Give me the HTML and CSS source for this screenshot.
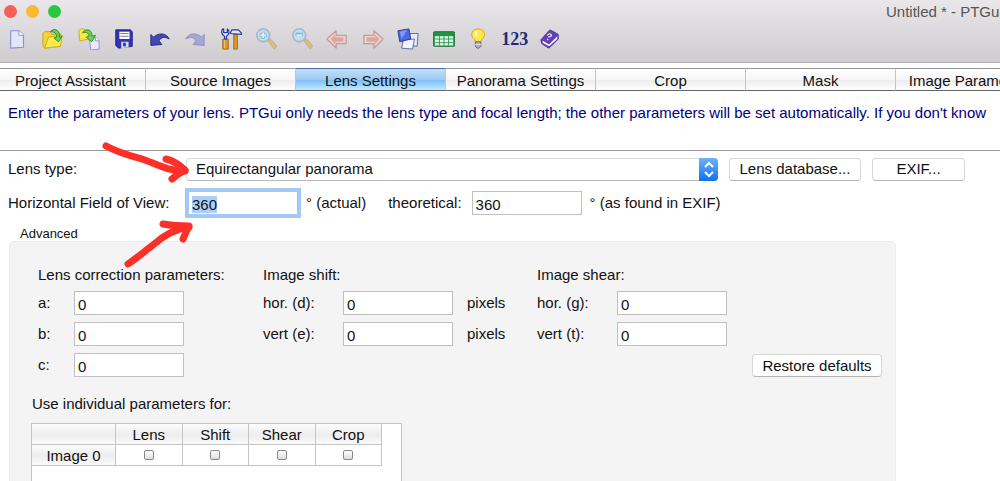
FILE: index.html
```html
<!DOCTYPE html>
<html lang="en">

<head>
  <meta charset="UTF-8">
  <meta name="viewport" content="width=device-width, initial-scale=1.0">
  <title>Untitled * - PTGui</title>
  <link rel="stylesheet" href="styles.css">
</head>

<body>
  <header class="window-header">
    <div class="titlebar">
      <button class="light close" aria-label="Close"></button>
      <button class="light minimize" aria-label="Minimize"></button>
      <button class="light maximize" aria-label="Zoom window"></button>
      <h1 class="window-title">Untitled * - PTGui</h1>
    </div>

    <div class="toolbar">
      <button class="tool" aria-label="New">
        <svg viewBox="0 0 24 24">
          <path d="M4 3h9l5 5v13l-14 1z" fill="#e3e5fa" stroke="#8f90cc" stroke-width="1.2" />
          <path d="M13 3v5h5" fill="#fff" stroke="#8f90cc" />
        </svg>
      </button>
      <button class="tool" aria-label="Open">
        <svg viewBox="0 0 24 24">
          <path d="M1 6l2-2h6l2 3 9-1v14L3 22 1 20z" fill="#f5d437" stroke="#c6a31c" />
          <path d="M3 22l4-12 15-2-2 12z" fill="#ffeb50" stroke="#cbaa20" />
          <path d="M9 4C14-1 20 3 19 10l3-1-4 6-5-4 3-1c0-4-2-6-7-6z" fill="#6fd356" stroke="#238b24" />
        </svg>
      </button>
      <button class="tool" aria-label="Apply template">
        <svg viewBox="0 0 24 24">
          <path d="M1 3l2-2h4l1 2 4-1v10L2 14z" fill="#ffe544" stroke="#cdab24" />
          <path d="M12 10h7l4 4v9l-9 1z" fill="#e9eafb" stroke="#8f90cc" />
          <path d="M19 10v4h4" fill="#fff" stroke="#8f90cc" />
          <path d="M5 5C10-1 16 3 15 9l4-1-4 7-6-5 3-1c0-3-2-5-7-4z" fill="#6fd356" stroke="#238b24" />
        </svg>
      </button>
      <button class="tool" aria-label="Save">
        <svg viewBox="0 0 24 24">
          <path d="M3 2h16l2 2v16l-15 2-3-3z" fill="#3334b5" stroke="#20217f" />
          <path d="M7 4h11v8H7z" fill="#fff" />
          <path d="M8 6h9M8 9h9" stroke="#6868b8" />
          <path d="M9 15h8v6l-8 1z" fill="#d5d8fa" />
          <path d="M11 16h3v4h-3z" fill="#3334b5" />
        </svg>
      </button>
      <button class="tool" aria-label="Undo">
        <svg viewBox="0 0 24 24">
          <path d="M2 7l3 3C10 5 19 5 22 12c-5-3-9-2-11 2l3 4-12 1z" fill="#4545ba" stroke="#25267c" />
        </svg>
      </button>
      <button class="tool faded" aria-label="Redo">
        <svg viewBox="0 0 24 24">
          <path d="M22 7l-3 3C14 5 5 5 2 12c5-3 9-2 11 2l-3 4 12 1z" fill="#7678d1" stroke="#424a9f" />
        </svg>
      </button>
      <button class="tool" aria-label="Tools">
        <svg viewBox="0 0 24 24">
          <path d="M3 12h6v11H3z" fill="#d99a24" stroke="#9b6a1d" />
          <path d="M5 13v9M17 10v12" stroke="#fac95e" />
          <path d="M5 12V9C0 6 2 1 4 1v4h4V1c3 2 2 6-1 8v3z" fill="#f3f5ff" stroke="#2935a4" stroke-width="1.3" />
          <path d="M15 7h4v16h-4z" fill="#d99a24" stroke="#9b6a1d" />
          <path d="M11 6l2-4h7l4 4v1z" fill="#e3e8ff" stroke="#2935a4" stroke-width="1.3" />
        </svg>
      </button>
      <button class="tool faded" aria-label="Zoom in">
        <svg viewBox="0 0 24 24">
          <path d="M14 14l3-2 7 8-3 3z" fill="#e0a52d" stroke="#b98725" />
          <circle cx="9" cy="8" r="7" fill="#bbe8f7" stroke="#799ccb" stroke-width="2" />
          <path d="M5 8h8M9 4v8" stroke="#2da7d9" stroke-width="4" />
          <path d="M6 8h6M9 5v6" stroke="#fff" stroke-width="2" />
        </svg>
      </button>
      <button class="tool faded" aria-label="Zoom out">
        <svg viewBox="0 0 24 24">
          <path d="M14 14l3-2 7 8-3 3z" fill="#e0a52d" stroke="#b98725" />
          <circle cx="9" cy="8" r="7" fill="#bbe8f7" stroke="#799ccb" stroke-width="2" />
          <path d="M5 7h8" stroke="#2da7d9" stroke-width="4" />
          <path d="M6 8h6" stroke="#fff" stroke-width="2" />
        </svg>
      </button>
      <button class="tool faded" aria-label="Previous">
        <svg viewBox="0 0 24 24">
          <path d="M1 12l10-9v5h11v9H11v5z" fill="#f7d6d0" stroke="#b65c59" stroke-width="1.4" />
          <path d="M5 12l5-5v3h9v5h-9v3z" fill="#ef725f" />
        </svg>
      </button>
      <button class="tool faded" aria-label="Next">
        <svg viewBox="0 0 24 24">
          <path d="M23 12L13 3v5H2v9h11v5z" fill="#f7d6d0" stroke="#b65c59" stroke-width="1.4" />
          <path d="M19 12l-5-5v3H5v5h9v3z" fill="#ef725f" />
        </svg>
      </button>
      <button class="tool" aria-label="Panorama editor">
        <svg viewBox="0 0 24 24">
          <path d="M14 6h9l-1 14-9-1z" fill="#e6e8ff" stroke="#5f62a1" />
          <path d="M7 13l12-1-2 11-12-1z" fill="#f3f4ff" stroke="#5f62a1" />
          <path d="M1 3l12-2 2 11-12 3z" fill="#4c66eb" stroke="#303879" />
          <path d="M3 4l8-2-6 10z" fill="#809af8" />
        </svg>
      </button>
      <button class="tool" aria-label="Control point table">
        <svg viewBox="0 0 24 24">
          <rect x="0" y="4" width="24" height="16" rx="2" fill="#219342" stroke="#187332" />
          <path d="M2 9h20v10H2z" fill="#e9fff0" />
          <path d="M7 9v10M12 9v10M17 9v10M2 12h20M2 16h20" stroke="#24964a" />
        </svg>
      </button>
      <button class="tool" aria-label="Tip">
        <svg viewBox="0 0 24 24">
          <path d="M8 15c0-3-4-4-4-8 0-8 14-8 14 0 0 4-4 5-4 8z" fill="#ffe846" stroke="#c9a624" />
          <path d="M7 7c0-2 1-3 3-4v7z" fill="#fffbd0" />
          <path d="M8 15h6v5l-2 2h-2l-2-2z" fill="#aaabc0" stroke="#6c6b7c" />
          <path d="M8 18h6" stroke="#ececf5" />
        </svg>
      </button>
      <button class="tool numbers">123</button>
      <button class="tool" aria-label="Help">
        <svg viewBox="0 0 24 24">
          <path d="M2 13l8-9c1-2 2-2 4-1l7 4v5l-9 9c-1 1-2 1-3 0l-6-4z" fill="#6240b6" stroke="#4d2b94" />
          <path d="M4 14l7 4 9-9v3l-9 8-7-4z" fill="#fff" />
          <path d="M9 8c2-3 6-1 4 1l-3 1M9 12l1 1" fill="none" stroke="#e3d8ff" stroke-width="1.5" />
        </svg>
      </button>
    </div>
  </header>

  <nav class="tabs">
    <button class="tab">Project Assistant</button>
    <button class="tab">Source Images</button>
    <button class="tab active">Lens Settings</button>
    <button class="tab">Panorama Settings</button>
    <button class="tab">Crop</button>
    <button class="tab">Mask</button>
    <button class="tab">Image Parameters</button>
  </nav>

  <p class="intro">Enter the parameters of your lens. PTGui only needs the lens type and focal length; the other parameters will be set automatically. If you don't know</p>

  <main class="settings">
    <div class="row">
      <label class="row-label" for="lensType">Lens type:</label>
      <div class="select-box">
        <select id="lensType">
          <option>Equirectangular panorama</option>
        </select>
        <svg class="select-arrows" viewBox="0 0 19 23">
          <path d="M6 9l4-4 4 4M6 14l4 4 4-4" />
        </svg>
      </div>
      <button class="button database">Lens database...</button>
      <button class="button exif">EXIF...</button>
    </div>

    <div class="row">
      <label class="row-label" for="fov">Horizontal Field of View:</label>
      <input class="field" type="text" id="fov" value="360" autofocus>
      <span class="unit">° (actual)</span>
      <label class="theoretical" for="fovExif">theoretical:</label>
      <input class="field" type="text" id="fovExif" value="360">
      <span class="unit">° (as found in EXIF)</span>
    </div>

    <!-- Hand drawn arrows pointing at the two fields -->
    <svg class="arrows" viewBox="0 0 120 130">
      <path d="M15 5C28 12 40 15 51 18C64 22 75 30 94 30" />
      <path d="M75 18Q84 20 94 29Q88 32 81 38" />
      <path d="M37 123C47 116 54 110 62 104C72 95 83 88 98 86" />
      <path d="M72 83Q83 85 98 85Q95 91 92 98" />
    </svg>

    <h2 class="group-title">Advanced</h2>
    <section class="group">
      <div class="params">
        <div class="param-set correction">
          <h3>Lens correction parameters:</h3>
          <div class="param"><label for="a">a:</label><input class="field" type="text" id="a" value="0"></div>
          <div class="param"><label for="b">b:</label><input class="field" type="text" id="b" value="0"></div>
          <div class="param"><label for="c">c:</label><input class="field" type="text" id="c" value="0"></div>
        </div>
        <div class="param-set shift">
          <h3>Image shift:</h3>
          <div class="param"><label for="d">hor. (d):</label><input class="field" type="text" id="d" value="0"><span>pixels</span></div>
          <div class="param"><label for="e">vert (e):</label><input class="field" type="text" id="e" value="0"><span>pixels</span></div>
        </div>
        <div class="param-set shear">
          <h3>Image shear:</h3>
          <div class="param"><label for="g">hor. (g):</label><input class="field" type="text" id="g" value="0"></div>
          <div class="param"><label for="t">vert (t):</label><input class="field" type="text" id="t" value="0"></div>
        </div>
        <button class="button restore">Restore defaults</button>
      </div>

      <h3 class="individual-title">Use individual parameters for:</h3>
      <div class="grid-box">
        <table class="image-table">
          <tr>
            <th class="image-name"></th>
            <th>Lens</th>
            <th>Shift</th>
            <th>Shear</th>
            <th>Crop</th>
          </tr>
          <tr>
            <th class="image-name">Image 0</th>
            <td><input type="checkbox" aria-label="Lens"></td>
            <td><input type="checkbox" aria-label="Shift"></td>
            <td><input type="checkbox" aria-label="Shear"></td>
            <td><input type="checkbox" aria-label="Crop"></td>
          </tr>
        </table>
      </div>
    </section>
  </main>

  <script>
    // Start with the field of view selected
    const fov = document.getElementById('fov');
    fov.focus();
    fov.select();
  </script>
</body>

</html>
```

FILE: styles.css
```css
* {
  box-sizing: border-box;
}

body {
  display: flex;
  flex-direction: column;
  min-height: 100vh;
  margin: 0;
  background: white;
  color: #111;
  font-family: "Liberation Sans", Arial, sans-serif;
  font-size: 15px;
  line-height: 18px;
  overflow: hidden;
}

button,
input,
select {
  font: inherit;
  color: inherit;
  margin: 0;
}

h1,
h2,
h3,
p {
  margin: 0;
  font-size: 15px;
  font-weight: normal;
}

/* Title bar and toolbar */
.window-header {
  background: linear-gradient(#e9e7e9, #cecccf);
  border-bottom: 1px solid #b3b1b4;
}

.titlebar {
  display: flex;
  align-items: center;
  gap: 9px;
  height: 23px;
  padding-left: 4px;
}

.light {
  flex: none;
  width: 13px;
  height: 13px;
  padding: 0;
  border: 0;
  border-radius: 50%;
}

.close {
  background: #f95e57;
}

.minimize {
  background: #fcb930;
}

.maximize {
  background: #28c840;
}

.window-title {
  margin-left: auto;
  width: 123px;
  padding-left: 9px;
  color: #555;
  white-space: nowrap;
}

.toolbar {
  display: grid;
  grid-template-columns: repeat(16, 1fr);
  width: 568px;
  height: 32px;
  margin-bottom: 7px;
}

.tool {
  display: flex;
  align-items: center;
  justify-content: center;
  padding: 0;
  border: 0;
  background: none;
}

.tool svg {
  flex: none;
  width: 22px;
  height: 22px;
}

.tool path {
  stroke-linejoin: round;
}

.faded {
  opacity: 0.5;
}

.numbers {
  color: #1d2d7c;
  font-family: "Liberation Serif", serif;
  font-size: 18px;
  font-weight: bold;
}

/* Tabs */
.tabs {
  display: flex;
  margin: 5px 0 0 -4px;
}

.tab {
  flex: 0 0 150px;
  height: 23px;
  padding: 2px 0 0;
  border: 0;
  border-top: 1px solid #969696;
  border-bottom: 1px solid #666;
  border-right: 1px solid #c4c4c4;
  background: linear-gradient(#fff 0%, #f6f6f6 50%, #ebebeb 51%, #fff 100%);
  white-space: nowrap;
}

.active {
  border-top-color: #4a6fa0;
  background: linear-gradient(#c5def5 0%, #9ccbf5 50%, #7cbcf5 51%, #bfeaff 100%);
}

.intro {
  height: 60px;
  padding: 13px 8px;
  border-bottom: 1px solid #999;
  color: #00007b;
  white-space: nowrap;
}

/* Lens rows */
.settings {
  position: relative;
  display: flex;
  flex: 1;
  flex-direction: column;
  padding: 6px 9px 0;
}

.row {
  display: flex;
  align-items: center;
  height: 24px;
  margin-bottom: 10px;
  white-space: nowrap;
}

.row-label {
  flex: 0 0 178px;
  margin-left: -1px;
}

.select-box {
  position: relative;
  flex: 1;
  max-width: 532px;
  height: 23px;
}

.select-box select {
  appearance: none;
  width: 100%;
  height: 23px;
  padding: 0 28px 0 9px;
  border: 1px solid #ddd;
  border-bottom-color: #bbb;
  border-radius: 4px;
  background: white;
}

.select-arrows {
  position: absolute;
  top: 0;
  right: 0;
  width: 19px;
  height: 23px;
  border-radius: 0 4px 4px 0;
  background: linear-gradient(#6db3fb, #0f70f5);
  pointer-events: none;
}

.select-arrows path {
  fill: none;
  stroke: white;
  stroke-width: 2;
}

.button {
  flex: none;
  height: 23px;
  padding: 0;
  border: 1px solid #d6d6d6;
  border-bottom-color: #b4b4b4;
  border-radius: 4px;
  background: white;
  white-space: nowrap;
}

.database {
  width: 132px;
  margin-left: 11px;
}

.exif {
  width: 93px;
  margin-left: 11px;
}

.field {
  flex: none;
  width: 110px;
  height: 24px;
  padding: 2px 3px 0;
  border: 1px solid #c0c0c0;
  border-radius: 0;
  background: white;
}

.field:focus {
  outline: 4px solid #a4c9f3;
  outline-offset: -1px;
}

.field::selection {
  background: #abd0f8;
  color: #111;
}

.row .field {
  margin-left: 2px;
}

.unit {
  margin-left: 8px;
}

.theoretical {
  margin-left: 22px;
  margin-right: 8px;
}

.arrows {
  position: absolute;
  top: -10px;
  left: 91px;
  width: 120px;
  height: 130px;
  pointer-events: none;
}

.arrows path {
  fill: none;
  stroke: #fb3029;
  stroke-width: 7;
  stroke-linecap: round;
  stroke-linejoin: round;
}

/* Advanced */
.group-title {
  padding: 1px 0 0 11px;
  font-size: 13px;
  line-height: 15px;
}

.group {
  display: flex;
  flex: 1;
  flex-direction: column;
  max-width: 887px;
  padding: 24px 13px 0 21px;
  border: 1px solid #ececec;
  border-bottom: 0;
  border-radius: 5px 5px 0 0;
  background: #f4f4f4;
}

.params {
  display: flex;
  align-items: flex-start;
  padding-left: 7px;
}

.param-set {
  flex: none;
}

.correction {
  width: 225px;
}

.shift {
  width: 274px;
}

.param {
  display: flex;
  align-items: center;
  height: 24px;
  margin-top: 7px;
}

.param label {
  width: 80px;
}

.correction .param label {
  width: 36px;
}

.param span {
  margin-left: 14px;
}

.restore {
  align-self: flex-end;
  width: 130px;
  margin-left: auto;
}

.individual-title {
  margin-top: 18px;
  padding-left: 1px;
}

.grid-box {
  flex: 1;
  width: 371px;
  margin-top: 10px;
  border: 1px solid #c4c4c4;
  border-bottom: 0;
  background: white;
}

.image-table {
  border-collapse: collapse;
  table-layout: fixed;
  width: 351px;
  margin: -1px 0 0 -1px;
}

.image-table th,
.image-table td {
  height: 21px;
  padding: 0;
  border: 1px solid #c4c4c4;
  text-align: center;
}

.image-table th {
  padding-top: 2px;
  background: linear-gradient(#fbfbfb, #ededed 50%, #fafafa);
  font-weight: normal;
}

.image-table .image-name {
  width: 84px;
}

.image-table input {
  appearance: none;
  display: block;
  width: 10px;
  height: 10px;
  margin: 0 auto;
  border: 1px solid #888;
  border-radius: 2px;
  background: linear-gradient(#fff, #ddd);
}
```
